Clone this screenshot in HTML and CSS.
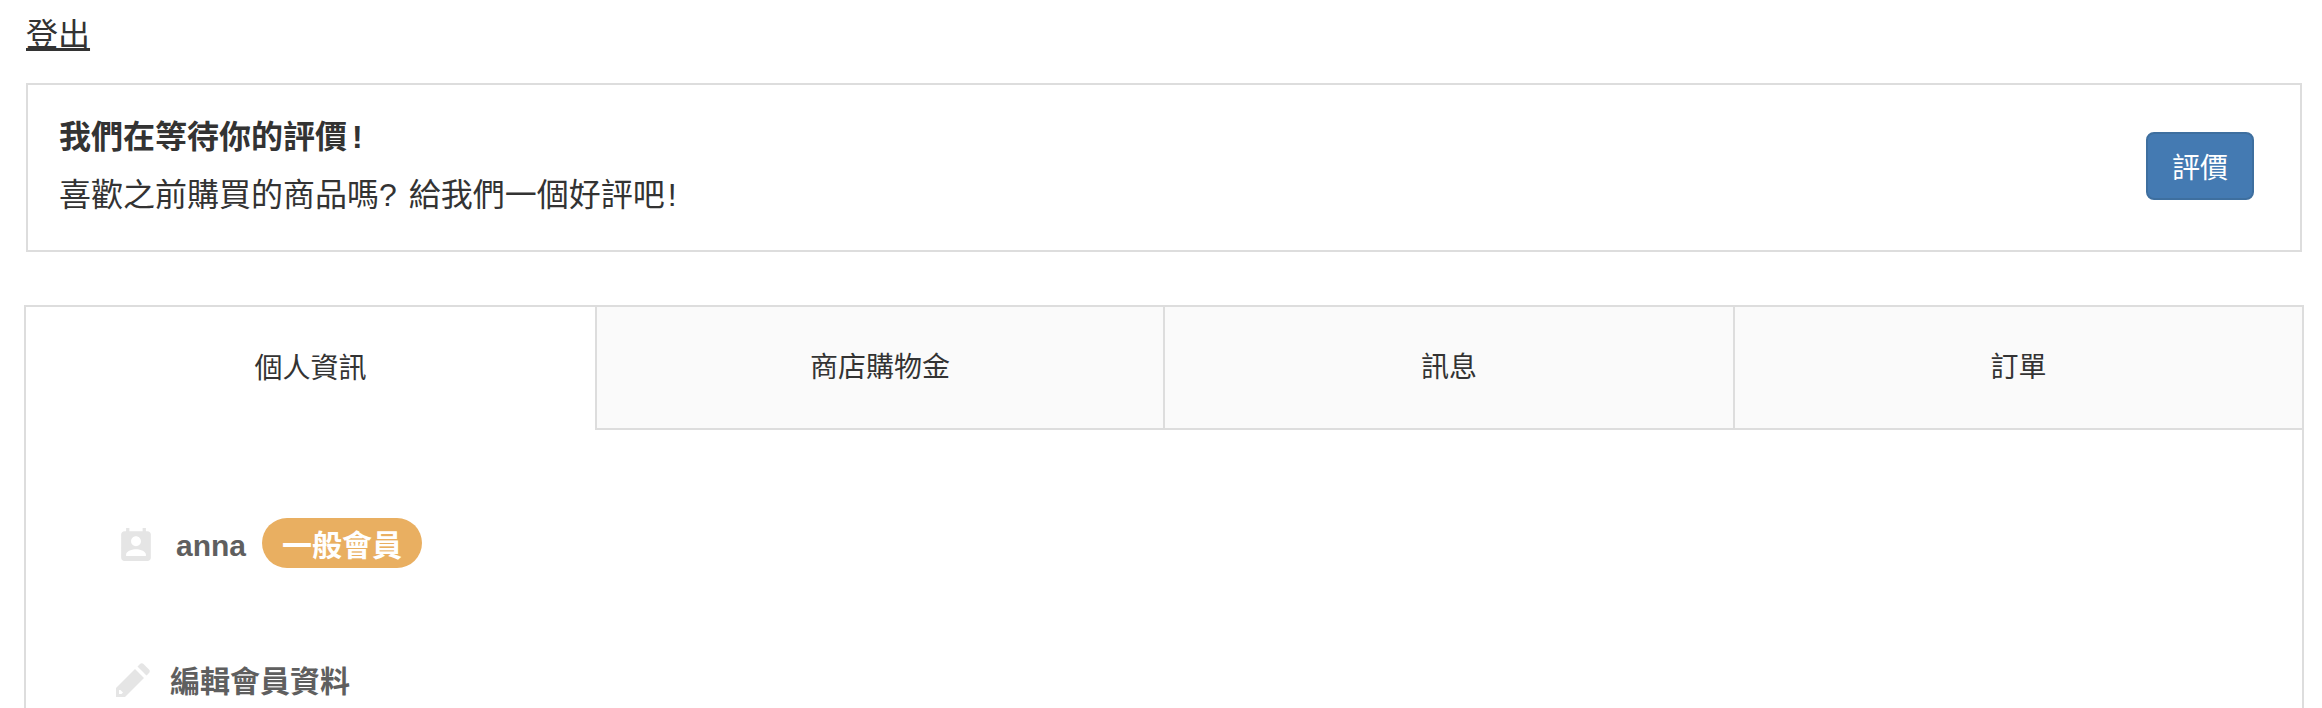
FILE: index.html
```html
<!DOCTYPE html>
<html lang="zh-Hant">
<head>
<meta charset="utf-8">
<title>會員中心</title>
<link rel="stylesheet" href="styles.css">
</head>
<body>
<div class="page">
  <a class="logout" href="#">登出</a>
  <section class="review">
    <div class="review-text">
      <p class="review-title">我們在等待你的評價<span class="bang">!</span></p>
      <p class="review-sub">喜歡之前購買的商品嗎? 給我們一個好評吧<span class="bang">!</span></p>
    </div>
    <a class="btn" href="#">評價</a>
  </section>
  <section class="panel">
    <nav class="tabs">
      <a class="tab active" href="#">個人資訊</a>
      <a class="tab" href="#">商店購物金</a>
      <a class="tab" href="#">訊息</a>
      <a class="tab" href="#">訂單</a>
    </nav>
    <div class="content">
      <div class="row user-row">
        <svg class="icon-contact" viewBox="3 1 18 20" aria-hidden="true"><path d="M19 3h-1V1h-2v2H8V1H6v2H5c-1.11 0-2 .9-2 2v14c0 1.1.89 2 2 2h14c1.1 0 2-.9 2-2V5c0-1.1-.9-2-2-2zm-7 3c1.66 0 3 1.34 3 3s-1.34 3-3 3-3-1.34-3-3 1.34-3 3-3zm6 12H6v-1c0-2 4-3.1 6-3.1s6 1.1 6 3.1v1z"/></svg>
        <span class="username">anna</span>
        <span class="badge">一般會員</span>
      </div>
      <div class="row edit-row">
        <svg class="icon-pencil" viewBox="0 0 34 34" aria-hidden="true"><path fill-rule="evenodd" d="M0 34V25L19 6l9 9L9 34H0zM3 27v4h2.500l1.500-1.500L4.500 27H3zM21.500 3.500 24 1c1-1 2.500-1 3.500 0l5.500 5.500c1 1 1 2.500 0 3.500l-2.500 2.500-9-9z"/></svg>
        <span class="edit-label">編輯會員資料</span>
      </div>
    </div>
  </section>
</div>
</body>
</html>
```
FILE: styles.css
```css
* { box-sizing: border-box; }
html, body { margin: 0; padding: 0; height: 708px; overflow: hidden; background: #fff; }
body { font-family: "Liberation Sans", "Noto Sans CJK TC", sans-serif; color: #333; }
.page { padding: 13px 18px 0 25px; }
.logout { display: block; width: fit-content; margin-left: 1px; font-size: 32px; line-height: 44px; color: #333; text-decoration: underline; }
.review { display: flex; align-items: center; justify-content: space-between; height: 169px; margin: 26px 2px 0 1px; padding: 0 46px 0 31px; border: 2px solid #ddd; }
.review p { margin: 0; }
.review-title { font-size: 32px; line-height: 55px; font-weight: 700; transform: translateY(-3px); }
.review-title .bang { padding-left: 5px; }
.review-sub { font-size: 32px; line-height: 55px; word-spacing: 3px; }
.review-sub .bang { padding-left: 3px; }
.btn { display: flex; align-items: center; justify-content: center; width: 108px; height: 68px; margin-top: -4px; font-size: 28px; color: #fff; background: #447ab2; border: 2px solid #3e6f9f; border-radius: 8px; text-decoration: none; }
.panel { margin-top: 53px; margin-left: -1px; border: 2px solid #ddd; height: 420px; }
.tabs { display: grid; grid-template-columns: 569px 568px 570px 1fr; height: 123px; }
.tab { display: flex; align-items: center; justify-content: center; padding-bottom: 5px; font-size: 28px; color: #333; text-decoration: none; background: #fafafa; border-left: 2px solid #ddd; border-bottom: 2px solid #ddd; }
.tab.active { background: #fff; border-left: 0; border-bottom: 0; }
.content { padding: 89px 0 0 91px; }
.row { display: flex; align-items: center; }
.user-row { height: 50px; }
.icon-contact { width: 30px; height: 33px; fill: #e5e5e5; margin: 0 25px 0 4px; }
.username { font-size: 30px; font-weight: 700; color: #5f5f5f; margin: 3px 16px 0 0; }
.badge { display: flex; align-items: center; justify-content: center; width: 160px; height: 50px; margin-top: -2px; border-radius: 25px; background: #e9af61; color: #fff; font-size: 30px; font-weight: 700; }
.edit-row { margin-top: 90px; height: 40px; margin-left: -1px; }
.icon-pencil { width: 34px; height: 34px; fill: #e5e5e5; margin: 2px 20px 0 0; }
.edit-label { font-size: 30px; font-weight: 700; color: #5f5f5f; }
```
